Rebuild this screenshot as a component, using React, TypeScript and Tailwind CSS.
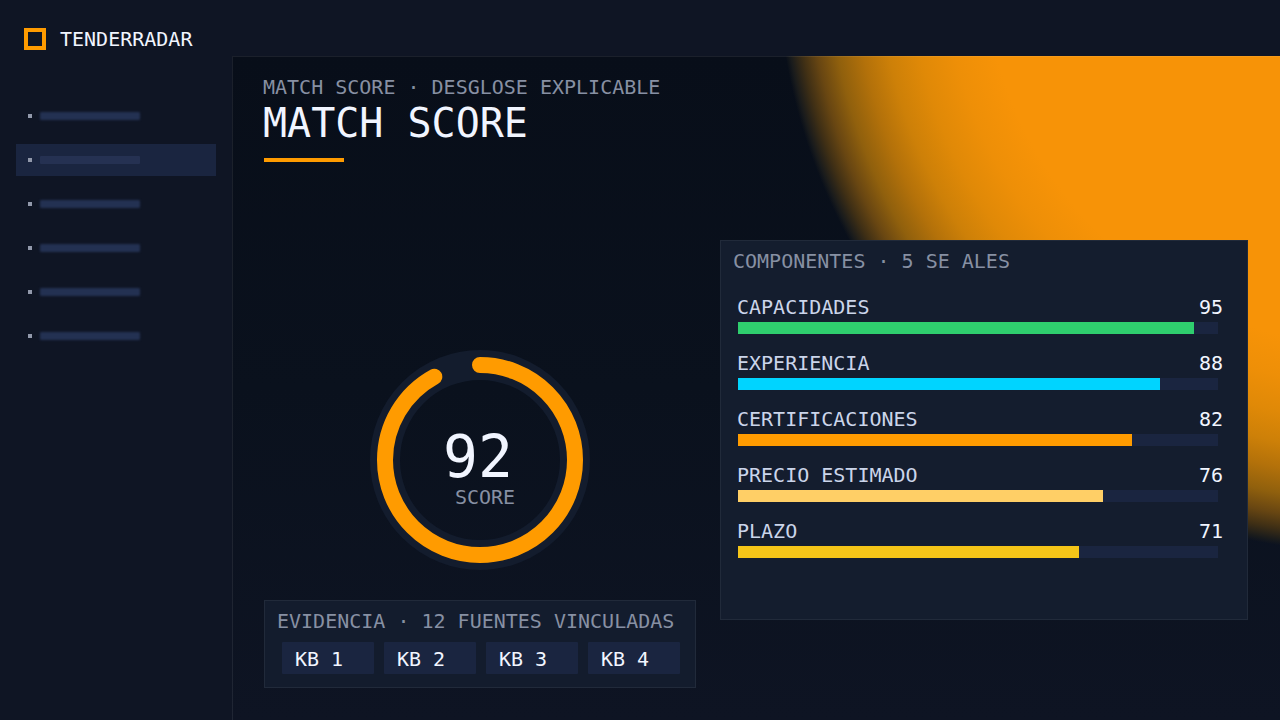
const navItems = [
  { label: "Panel", href: "#panel", active: false },
  { label: "Match score", href: "#match-score", active: true },
  { label: "Licitaciones", href: "#licitaciones", active: false },
  { label: "Evidencia", href: "#evidencia", active: false },
  { label: "Informes", href: "#informes", active: false },
  { label: "Ajustes", href: "#ajustes", active: false },
];

const components = [
  { label: "CAPACIDADES", value: 95, color: "bg-[#2fce6e]" },
  { label: "EXPERIENCIA", value: 88, color: "bg-[#00d4ff]" },
  { label: "CERTIFICACIONES", value: 82, color: "bg-[#ff9b00]" },
  { label: "PRECIO ESTIMADO", value: 76, color: "bg-[#ffcf66]" },
  { label: "PLAZO", value: 71, color: "bg-[#f5c518]" },
];

const sources = ["KB 1", "KB 2", "KB 3", "KB 4"];

function Header() {
  return (
    <header className="flex h-14 items-end gap-3.5 px-6 pb-1.5">
      <span className="size-[22px] border-4 border-[#ff9b00]" />
      <span className="pb-px text-[#f1f5ff]">TENDERRADAR</span>
    </header>
  );
}

function Sidebar() {
  return (
    <nav className="flex w-[232px] shrink-0 flex-col gap-3 px-4 pt-11">
      {navItems.map((item) => (
        <a
          key={item.href}
          href={item.href}
          aria-label={item.label}
          className={`flex h-8 items-center gap-2 px-3 ${item.active ? "bg-[#1a2540]" : ""}`}
        >
          <span className="size-1 bg-[#9299ab]" />
          <span
            className={`h-2 w-[100px] rounded-[1px] ${item.active ? "bg-[#253152]" : "bg-[#233152] blur-[1px]"}`}
          />
        </a>
      ))}
    </nav>
  );
}

function ScoreRing({ score }: { score: number }) {
  return (
    <div className="relative size-[220px]">
      <svg viewBox="0 0 220 220" className="size-full" aria-hidden="true">
        <circle cx="110" cy="110" r="95" fill="none" stroke="#131c2d" strokeWidth="30" />
        <circle
          cx="110"
          cy="110"
          r="95"
          fill="none"
          stroke="#ff9b00"
          strokeWidth="16"
          strokeLinecap="round"
          pathLength="100"
          strokeDasharray={`${score} 100`}
          transform="rotate(-90 110 110)"
        />
      </svg>
      <div className="absolute inset-0 flex flex-col items-center pt-[77px]">
        <span className="pr-1 text-[58px] leading-[60px] text-[#f1f5ff]">{score}</span>
        <span className="pl-2.5 text-[#8790a3]">SCORE</span>
      </div>
    </div>
  );
}

function Evidence() {
  return (
    <section className="border border-[#212a3a] bg-[#131c2d] px-[11px] pt-2.5 pb-[13px]">
      <h2 className="pl-px whitespace-nowrap text-[#8790a3]">EVIDENCIA · 12 FUENTES VINCULADAS</h2>
      <div className="mt-[11px] grid grid-cols-4 gap-2.5 pr-1 pl-1.5">
        {sources.map((source) => (
          <button
            key={source}
            type="button"
            className="h-8 rounded-[1px] bg-[#1a2540] pt-0.5 pl-[13px] text-left text-[#f1f5ff]"
          >
            {source}
          </button>
        ))}
      </div>
    </section>
  );
}

function Components() {
  return (
    <section className="h-[380px] border border-[#212a3a] bg-[#141d2e] px-3 pt-2.5">
      <h2 className="text-[#8790a3]">COMPONENTES · 5 SE ALES</h2>
      <dl className="mt-[26px] flex flex-col gap-[19px] pr-3 pl-1">
        {components.map((item) => (
          <div key={item.label}>
            <div className="flex justify-between">
              <dt className="text-[#cbd5ea]">{item.label}</dt>
              <dd className="text-[#f1f5ff]">{item.value}</dd>
            </div>
            <dd className="mt-[5px] mr-[5px] ml-px h-3 bg-[#1a2540]">
              <div className={`h-full ${item.color}`} style={{ width: `${item.value}%` }} />
            </dd>
          </div>
        ))}
      </dl>
    </section>
  );
}

export default function App() {
  return (
    <div className="flex min-h-screen flex-col bg-[#0f1524] font-['DejaVu_Sans_Mono',monospace] text-[20px] leading-5">
      <Header />
      <div className="flex grow">
        <Sidebar />
        <main className="min-w-0 grow border-t border-l border-white/8 bg-[radial-gradient(circle_at_calc(100%_+_94px)_-100px,#f79307_0px,#f79307_390px,#ee8f07_430px,#e08907_465px,#cd8008_495px,#b3710a_520px,#90600d_545px,#684612_565px,#3f2f15_580px,#191b1c_592px,transparent_597px),linear-gradient(#080e19,#0a111d_50%,#0e1423)] bg-origin-border bg-no-repeat pr-8 pb-8 pl-[31px]">
          <div className="pt-5">
            <p className="-ml-px text-[#8790a3]">MATCH SCORE · DESGLOSE EXPLICABLE</p>
            <h1 className="-ml-px mt-1.5 text-[40px] leading-10 text-[#f1f5ff]">MATCH SCORE</h1>
            <div className="mt-[15px] h-1 w-20 bg-[#ff9b00]" />
          </div>
          <div className="mt-[78px] grid grid-cols-[9fr_11fr] gap-6">
            <div className="flex flex-col pt-[110px]">
              <div className="flex justify-center">
                <ScoreRing score={92} />
              </div>
              <div className="mt-[30px]">
                <Evidence />
              </div>
            </div>
            <Components />
          </div>
        </main>
      </div>
    </div>
  );
}
